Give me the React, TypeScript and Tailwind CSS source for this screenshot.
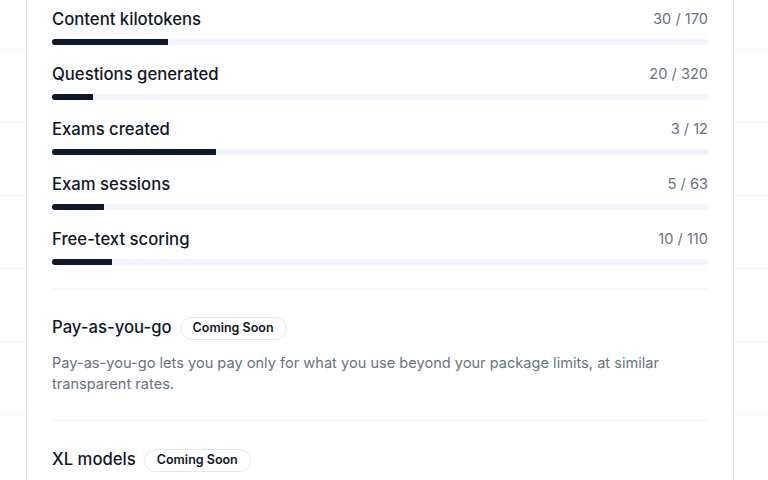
import React from "react";

const usage = [
    { label: "Content kilotokens", used: 30, limit: 170 },
    { label: "Questions generated", used: 20, limit: 320 },
    { label: "Exams created", used: 3, limit: 12 },
    { label: "Exam sessions", used: 5, limit: 63 },
    { label: "Free-text scoring", used: 10, limit: 110 },
];

const upcoming = [
    {
        title: "Pay-as-you-go",
        text: "Pay-as-you-go lets you pay only for what you use beyond your package limits, at similar transparent rates.",
    },
    { title: "XL models", text: "" },
];

function UsageRow({ label, used, limit }: { label: string; used: number; limit: number }) {
    const pct = Math.min(100, (used / limit) * 100);
    return (
        <div>
            <div className="flex items-center justify-between h-6">
                <span className="text-[16.7px] font-medium text-gray-900">{label}</span>
                <span className="text-[14.6px] text-gray-500">
                    {used} / {limit}
                </span>
            </div>
            <div className="mt-[7px] h-1.5 w-full rounded-full bg-slate-100 overflow-hidden">
                <div className="h-full bg-slate-900" style={{ width: `${pct}%` }} />
            </div>
        </div>
    );
}

export default function App() {
    return (
        <div
            className="h-[480px] overflow-hidden bg-white bg-[linear-gradient(to_bottom,#f4f4f5_1px,transparent_1px)] bg-[size:100%_73px] bg-[position:0_49px] pl-[26px]"
            style={{ fontFamily: "Inter, 'Noto Sans', sans-serif" }}
        >
            <div className="-mt-6 w-[708px] rounded-xl border border-gray-200 bg-white px-[25px] pt-[31px]">
                {/* ── Usage ── */}
                <div className="flex flex-col gap-[18px] pb-[23px]">
                    {usage.map((u) => (
                        <UsageRow key={u.label} {...u} />
                    ))}
                </div>

                {/* ── Coming soon features ── */}
                {upcoming.map(({ title, text }) => (
                    <div key={title} className="border-t border-gray-100 pt-[27px] pb-[25px]">
                        <div className="flex items-center gap-2 h-6">
                            <span className="text-[16.7px] font-medium text-gray-900">{title}</span>
                            <span className="rounded-full border border-gray-200 px-3 h-[23px] flex items-center text-[12.5px] font-semibold text-gray-900">
                                Coming Soon
                            </span>
                        </div>
                        {text && (
                            <p className="mt-[13px] text-[14.6px] leading-[21px] text-gray-500">{text}</p>
                        )}
                    </div>
                ))}
            </div>
        </div>
    );
}
